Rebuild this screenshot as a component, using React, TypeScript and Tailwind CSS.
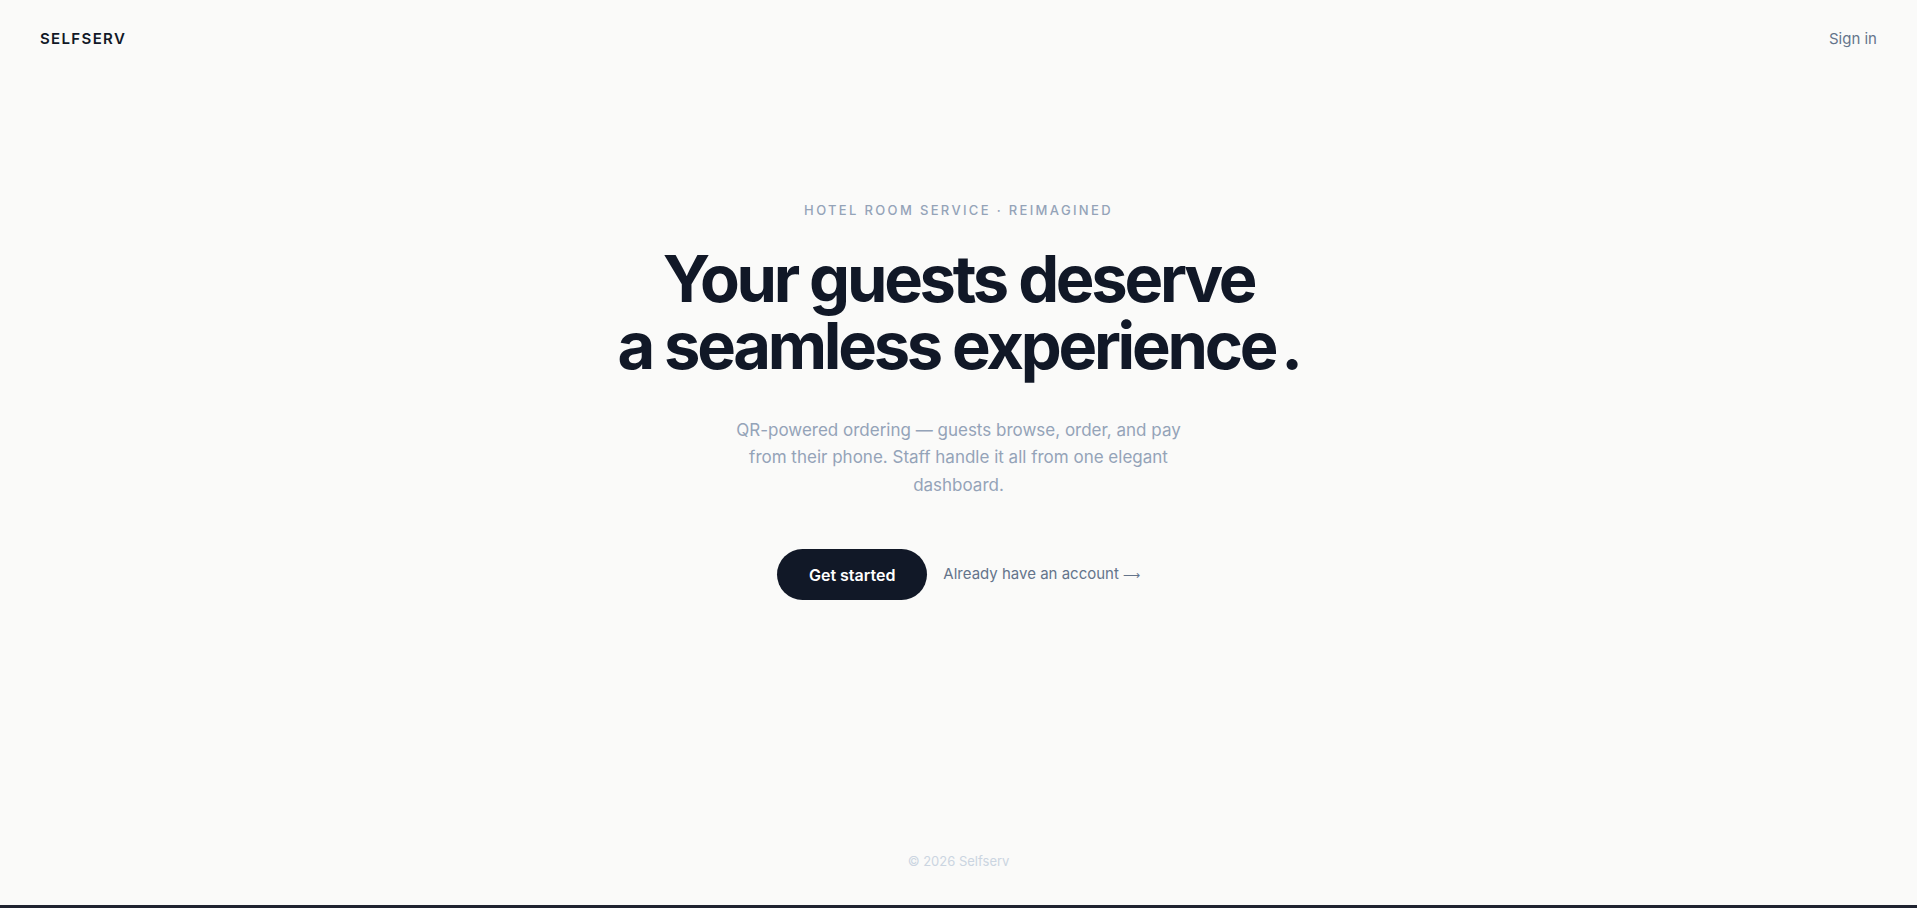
export default function App() {
  return (
    <div className="bg-[#1f2330] pb-[3px]" style={{ fontFamily: "Inter, 'Noto Sans', sans-serif" }}>
      <div className="flex h-[905px] flex-col bg-[#fafaf9] text-[#111827]">
        <header className="flex h-[78px] items-center justify-between px-10">
          <span className="text-[15px] font-semibold tracking-[0.09em] text-[#111827]">SELFSERV</span>
          <a href="#" className="text-[15px] text-[#64748b]">
            Sign in
          </a>
        </header>

        <main className="flex flex-1 flex-col items-center pt-[123px] text-center">
          <p className="text-[13px] font-medium tracking-[0.18em] text-[#94a3b8]">
            HOTEL ROOM SERVICE · REIMAGINED
          </p>
          <h1 className="mt-[24px] text-[65px] font-bold leading-[67px] tracking-[-0.05em] text-[#111827]">
            Your guests deserve
            <br />
            a seamless experience<span className="ml-[6px]">.</span>
          </h1>
          <p className="mt-[38px] max-w-[460px] text-[17px] leading-[27.5px] text-[#94a3b8]">
            QR-powered ordering — guests browse, order, and pay from their phone. Staff handle it all from one
            elegant dashboard.
          </p>
          <div className="mt-[50px] flex items-center gap-4">
            <button className="h-[51px] rounded-full bg-[#111827] px-8 text-[16px] font-semibold text-white">
              Get started
            </button>
            <a href="#" className="text-[15px] text-[#64748b]">
              Already have an account
              <span className="ml-1 text-[12px]" style={{ fontFamily: "'DejaVu Sans', sans-serif" }}>
                ⟶
              </span>
            </a>
          </div>
        </main>

        <footer className="pb-[34px] text-center text-[13px] text-[#cbd5e1]">© 2026 Selfserv</footer>
      </div>
    </div>
  );
}
